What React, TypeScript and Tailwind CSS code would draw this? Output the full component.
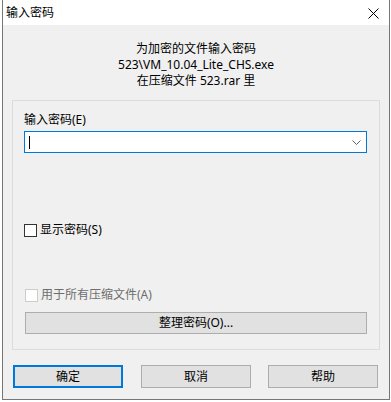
import React from 'react';

const font = { fontFamily: '"Noto Sans", "Noto Sans CJK SC", sans-serif' };

const Button = ({ label, primary }: { label: string; primary?: boolean }) => (
  <div
    className={
      'flex h-[23px] w-[110px] items-center justify-center bg-[#e1e1e1] text-[12px] leading-none text-black ' +
      (primary ? 'border-2 border-[#0078d7]' : 'border border-[#adadad]')
    }
  >
    {label}
  </div>
);

const App = () => {
  return (
    <div className="h-[402px] w-[391px] overflow-hidden bg-white" style={font}>
      <div className="ml-[2px] flex h-[400px] w-[388px] flex-col border-x border-b border-[#767676]">
        {/* title bar */}
        <div className="flex h-[25px] shrink-0 items-center justify-between bg-white pl-[3px] pr-[10px]">
          <span className="text-[12px] leading-none text-black">输入密码</span>
          <svg width="11" height="11" viewBox="0 0 11 11" className="mt-[1px]">
            <path d="M0.5 0.5L10.5 10.5M10.5 0.5L0.5 10.5" stroke="#000" strokeWidth="1" />
          </svg>
        </div>

        <div className="flex flex-1 flex-col bg-[#f0f0f0]">
          {/* header */}
          <div className="mt-[16px] flex flex-col items-center text-[12px] leading-[16px] text-black">
            <span>为加密的文件输入密码</span>
            <span>523\VM_10.04_Lite_CHS.exe</span>
            <span>在压缩文件 523.rar 里</span>
          </div>

          {/* group box */}
          <div className="mx-[9px] mt-[11px] flex h-[250px] flex-col border border-[#dcdcdc] pl-[11px] pr-[12px]">
            <span className="mt-[11px] text-[12px] leading-[16px] text-black">输入密码(E)</span>
            <div className="mt-[3px] flex h-[22px] items-center justify-between border border-[#0078d7] bg-white pl-[4px] pr-[5px]">
              <div className="h-[13px] w-px bg-black" />
              <svg width="9" height="5" viewBox="0 0 9 5">
                <path d="M0.5 0.5L4.5 4.5L8.5 0.5" fill="none" stroke="#606060" strokeWidth="1" />
              </svg>
            </div>

            <div className="mt-[69px] flex items-center gap-[3px] text-[12px] leading-[16px] text-black">
              <div className="h-[13px] w-[13px] border border-[#333333] bg-white" />
              <span>显示密码(S)</span>
            </div>

            <div className="mt-[49px] flex items-center gap-[3px] text-[12px] leading-[16px] text-[#6d6d6d]">
              <div className="ml-px h-[13px] w-[13px] border border-[#cccccc] bg-white" />
              <span>用于所有压缩文件(A)</span>
            </div>

            <div className="ml-px mt-[9px] flex h-[22px] w-[342px] items-center justify-center border border-[#adadad] bg-[#e1e1e1] text-[12px] leading-none text-black">
              整理密码(O)...
            </div>
          </div>

          {/* buttons */}
          <div className="mt-[15px] flex pl-[10px]">
            <Button label="确定" primary />
            <div className="ml-[18px]">
              <Button label="取消" />
            </div>
            <div className="ml-[17px]">
              <Button label="帮助" />
            </div>
          </div>
        </div>
      </div>
    </div>
  );
};

export default App;
